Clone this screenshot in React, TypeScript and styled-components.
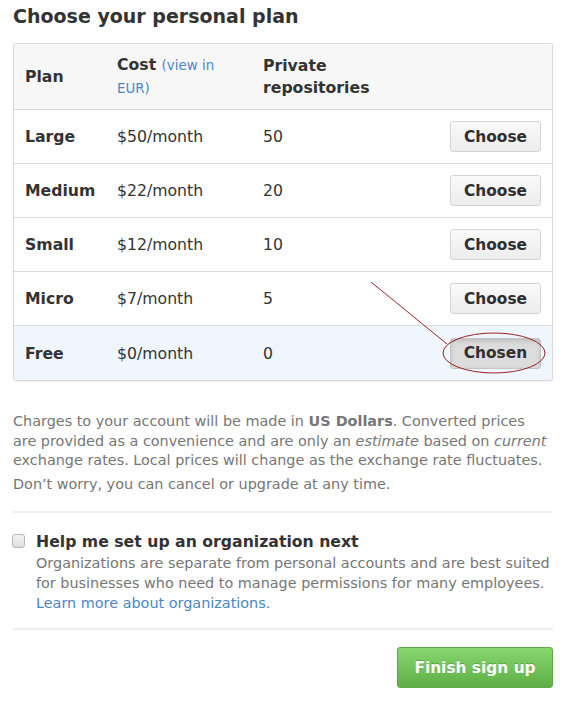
import React from "react";
import styled, { createGlobalStyle } from "styled-components";

const Global = createGlobalStyle`
  html, body { margin: 0; padding: 0; background: #fff; }
  body { font-family: "DejaVu Sans", "Liberation Sans", sans-serif; color: #333; }
  * { box-sizing: border-box; }
`;

const Page = styled.div`
  position: relative;
  width: 573px;
  padding: 4px 20px 20px 13px;
`;

const Title = styled.h2`
  margin: 0 0 15px;
  font-size: 19px;
  line-height: 24px;
  font-weight: bold;
  color: #333;
`;

const PlanTable = styled.table`
  width: 540px;
  border-collapse: separate;
  border-spacing: 0;
  border: 1px solid #d8d8d8;
  border-radius: 3px;
  box-shadow: 0 1px 2px rgba(0, 0, 0, 0.06);
  table-layout: fixed;
  overflow: hidden;
`;

const HeadCell = styled.th<{ $w?: number }>`
  width: ${(p) => (p.$w ? `${p.$w}px` : "auto")};
  background: #f7f7f7;
  text-align: left;
  font-size: 15.7px;
  line-height: 22px;
  font-weight: bold;
  padding: 10px 11px 9px;
  height: 64px;
  border-bottom: 1px solid #d8d8d8;
  vertical-align: middle;
`;

const Cell = styled.td<{ $bold?: boolean; $right?: boolean; $chosen?: boolean; $last?: boolean }>`
  font-size: 15.7px;
  font-weight: ${(p) => (p.$bold ? "bold" : "normal")};
  text-align: ${(p) => (p.$right ? "right" : "left")};
  background: ${(p) => (p.$chosen ? "#eff6fd" : "#fff")};
  height: 54px;
  padding: 0 11px;
  border-bottom: ${(p) => (p.$last ? "none" : "1px solid #dcdcdc")};
  vertical-align: middle;
  color: #333;
`;

const Small = styled.a`
  font-size: 13.4px;
  font-weight: normal;
  color: #4a86c8;
  text-decoration: none;
`;

const PlanButton = styled.button<{ $chosen?: boolean }>`
  font-family: inherit;
  font-size: 15.4px;
  font-weight: bold;
  color: #2f2f2f;
  width: 91px;
  height: 31px;
  padding: 0;
  border-radius: 3px;
  border: 1px solid ${(p) => (p.$chosen ? "#c5c5c5" : "#d4d4d4")};
  background: ${(p) =>
    p.$chosen ? "#dcdcdc" : "linear-gradient(#fafafa, #ececec)"};
  box-shadow: ${(p) => (p.$chosen ? "inset 0 2px 4px rgba(0,0,0,0.15)" : "none")};
  cursor: pointer;
`;

const Note = styled.p`
  margin: 0 0 4px;
  font-size: 14.4px;
  line-height: 19.5px;
  color: #767676;
  strong { color: #767676; }
`;

const Notes = styled.div`
  margin-top: 31px;
  padding-bottom: 13px;
  border-bottom: 2px solid #eee;
  width: 540px;
`;

const OrgBlock = styled.div`
  display: flex;
  gap: 11px;
  padding: 18px 0 15px;
  border-bottom: 2px solid #eee;
  width: 540px;
`;

const Check = styled.input`
  appearance: none;
  margin: 3px 0 0 -1px;
  width: 13px;
  height: 14px;
  flex: none;
  border: 1px solid #b8b8b8;
  border-radius: 3px;
  background: linear-gradient(#f4f4f4, #dedede);
`;

const OrgTitle = styled.div`
  font-size: 15.7px;
  font-weight: bold;
  line-height: 22px;
  margin-bottom: 0;
  color: #333;
`;

const OrgText = styled.p`
  margin: 0;
  font-size: 14.4px;
  line-height: 20px;
  color: #767676;
`;

const Link = styled.a`
  color: #4a86c8;
  text-decoration: none;
`;

const Actions = styled.div`
  display: flex;
  justify-content: flex-end;
  width: 540px;
  padding-top: 17px;
`;

const Finish = styled.button`
  font-family: inherit;
  font-size: 15.4px;
  font-weight: bold;
  color: #fff;
  text-shadow: 0 -1px 0 rgba(0, 0, 0, 0.2);
  width: 156px;
  height: 41px;
  border-radius: 3px;
  border: 1px solid #5ca941;
  background: linear-gradient(#85d86e, #5fae46);
  cursor: pointer;
`;

const Annotation = styled.svg`
  position: absolute;
  left: 0;
  top: 0;
  pointer-events: none;
`;

const plans = [
  { name: "Large", cost: "$50/month", repos: "50" },
  { name: "Medium", cost: "$22/month", repos: "20" },
  { name: "Small", cost: "$12/month", repos: "10" },
  { name: "Micro", cost: "$7/month", repos: "5" },
  { name: "Free", cost: "$0/month", repos: "0", chosen: true },
];

export default function App() {
  return (
    <>
      <Global />
      <Page>
        <Title>Choose your personal plan</Title>
        <PlanTable>
          <thead>
            <tr>
              <HeadCell $w={92}>Plan</HeadCell>
              <HeadCell $w={146}>
                Cost <Small href="#">(view in</Small>
                <br />
                <Small href="#">EUR)</Small>
              </HeadCell>
              <HeadCell>
                Private
                <br />
                repositories
              </HeadCell>
              <HeadCell $w={115} />
            </tr>
          </thead>
          <tbody>
            {plans.map((p, i) => (
              <tr key={p.name}>
                <Cell $bold $chosen={p.chosen} $last={i === plans.length - 1}>
                  {p.name}
                </Cell>
                <Cell $chosen={p.chosen} $last={i === plans.length - 1}>
                  {p.cost}
                </Cell>
                <Cell $chosen={p.chosen} $last={i === plans.length - 1}>
                  {p.repos}
                </Cell>
                <Cell $right $chosen={p.chosen} $last={i === plans.length - 1}>
                  <PlanButton $chosen={p.chosen}>{p.chosen ? "Chosen" : "Choose"}</PlanButton>
                </Cell>
              </tr>
            ))}
          </tbody>
        </PlanTable>
        <Notes>
          <Note>
            Charges to your account will be made in <strong>US Dollars</strong>. Converted prices
            <br />
            are provided as a convenience and are only an <em>estimate</em> based on <em>current</em>
            <br />
            exchange rates. Local prices will change as the exchange rate fluctuates.
          </Note>
          <Note>Don’t worry, you can cancel or upgrade at any time.</Note>
        </Notes>
        <OrgBlock>
          <Check type="checkbox" />
          <div>
            <OrgTitle>Help me set up an organization next</OrgTitle>
            <OrgText>
              Organizations are separate from personal accounts and are best suited
              <br />
              for businesses who need to manage permissions for many employees.
              <br />
              <Link href="#">Learn more about organizations.</Link>
            </OrgText>
          </div>
        </OrgBlock>
        <Actions>
          <Finish>Finish sign up</Finish>
        </Actions>
        <Annotation width="573" height="713" viewBox="0 0 573 713">
          <line x1="371" y1="282" x2="447" y2="344" stroke="#9b2226" strokeWidth="1" />
          <ellipse cx="494" cy="353" rx="51" ry="20" fill="none" stroke="#9b2226" strokeWidth="1" />
        </Annotation>
      </Page>
    </>
  );
}
